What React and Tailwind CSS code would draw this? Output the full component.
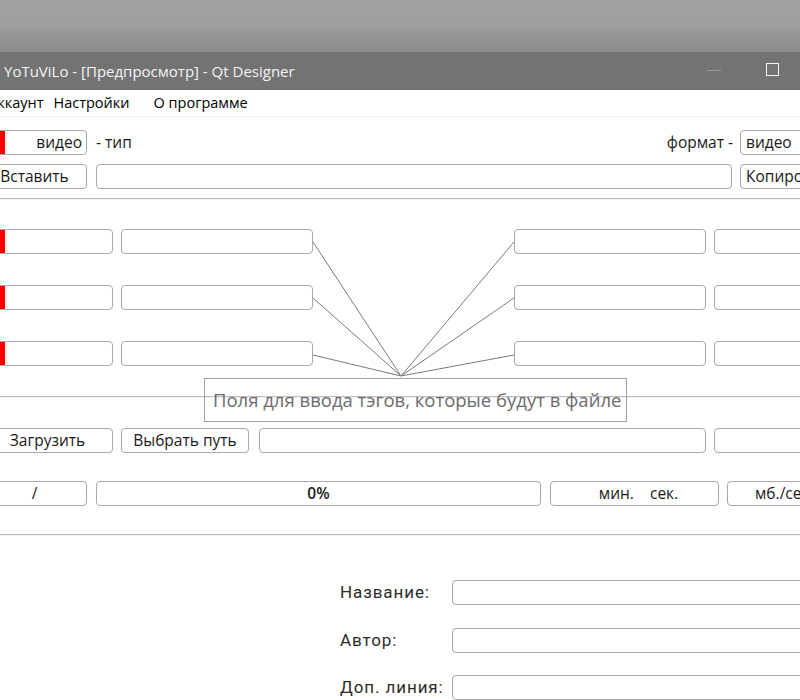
import React from "react";

const widgetFont = { fontFamily: "'Open Sans', 'Noto Sans', sans-serif" };

function Box({ className = "", children, red = false }) {
  return (
    <div
      className={`h-[25px] shrink-0 flex items-center border border-[#a8a8a8] rounded-[4px] bg-white text-[15.5px] text-[#1a1a1a] whitespace-nowrap overflow-hidden ${className}`}
    >
      {red && <div className="ml-[17px] w-[5px] h-[23px] bg-[#ff0000]" />}
      {children}
    </div>
  );
}

function Separator({ className = "" }) {
  return <div className={`h-[2px] w-full border-t border-[#bdbdbd] border-b border-b-[#f2f2f2] ${className}`} />;
}

export default function App() {
  return (
    <div className="relative w-[800px] h-[700px] overflow-hidden bg-white" style={widgetFont}>
      {/* desktop strip above the window */}
      <div className="h-[52px] bg-gradient-to-b from-[#a3a3a3] via-[#9d9d9d] to-[#8c8c8c]" />

      {/* title bar */}
      <div className="h-[38px] bg-[#737373] flex items-center relative">
        <span className="ml-[4px] text-[15px] text-[#f4f4f4]">
          YoTuViLo - [Предпросмотр] - Qt Designer
        </span>
        <div className="absolute left-[707px] top-[18px] w-[14px] h-[1px] bg-[#9c9c9c]" />
        <div className="absolute left-[766px] top-[11px] w-[13px] h-[13px] border-[1.5px] border-[#f4f4f4]" />
      </div>

      {/* menu bar */}
      <div className="h-[27px] flex items-center text-[14.5px] text-black border-b border-[#f0f0f0]">
        <span className="ml-[-12px]">Аккаунт</span>
        <span className="ml-[10px]">Настройки</span>
        <span className="ml-[24px]">О программе</span>
      </div>

      {/* content */}
      <div className="ml-[-18px] w-[1000px]">
        {/* row 1 */}
        <div className="mt-[13px] flex items-center">
          <Box className="w-[105px]" red>
            <span className="ml-auto mr-[4px]">видео</span>
          </Box>
          <div className="ml-[9px] w-[637px] flex justify-between text-[15.5px] text-[#1a1a1a]">
            <span>- тип</span>
            <span>формат -</span>
          </div>
          <Box className="ml-[7px] w-[110px]">
            <span className="ml-[5px]">видео</span>
          </Box>
        </div>

        {/* row 2 */}
        <div className="mt-[9px] flex items-center">
          <Box className="w-[105px] justify-center">Вставить</Box>
          <Box className="ml-[9px] w-[636px]" />
          <Box className="ml-[8px] w-[100px]">
            <span className="ml-[5px]">Копировать</span>
          </Box>
        </div>
      </div>

      <Separator className="mt-[9px]" />

      <div className="ml-[-18px] w-[1000px]">
        {[0, 1, 2].map((i) => (
          <div key={i} className={`${i === 0 ? "mt-[29px]" : "mt-[31px]"} flex items-center`}>
            <Box className="w-[131px]" red />
            <Box className="ml-[8px] w-[192px]" />
            <Box className="ml-[201px] w-[192px]" />
            <Box className="ml-[8px] w-[150px]" />
          </div>
        ))}
      </div>

      <Separator className="mt-[30px]" />

      <div className="ml-[-18px] w-[1000px]">
        <div className="mt-[30px] flex items-center">
          <Box className="w-[131px] justify-center">Загрузить</Box>
          <Box className="ml-[8px] w-[128px] justify-center">Выбрать путь</Box>
          <Box className="ml-[10px] w-[447px]" />
          <Box className="ml-[8px] w-[150px]" />
        </div>

        <div className="mt-[28px] flex items-center">
          <Box className="w-[105px] justify-center">/</Box>
          <Box className="ml-[9px] w-[445px] justify-center font-semibold">0%</Box>
          <Box className="ml-[9px] w-[169px] justify-center">
            <span className="ml-[8px]">мин.&nbsp;&nbsp;&nbsp;&nbsp;сек.</span>
          </Box>
          <Box className="ml-[8px] w-[120px]">
            <span className="ml-[27px]">мб./сек.</span>
          </Box>
        </div>
      </div>

      <Separator className="mt-[28px]" />

      {/* form */}
      <div
        className="ml-[340px] mt-[44px] flex flex-col gap-[22px] text-[17px] tracking-[0.9px] text-[#2b2b2b]"
        style={{ fontFamily: "Roboto, 'Noto Sans', sans-serif" }}
      >
        {["Название:", "Автор:", "Доп. линия:"].map((label) => (
          <div key={label} className="flex items-center">
            <span className="w-[112px] shrink-0">{label}</span>
            <Box className="w-[400px]" />
          </div>
        ))}
      </div>

      {/* callout lines */}
      <svg className="absolute left-0 top-0 pointer-events-none" width="800" height="700">
        <g stroke="#7a7a7a" strokeWidth="1" fill="none">
          <line x1="313" y1="242" x2="401" y2="376" />
          <line x1="313" y1="298" x2="401" y2="376" />
          <line x1="313" y1="355" x2="401" y2="376" />
          <line x1="514" y1="242" x2="401" y2="376" />
          <line x1="514" y1="298" x2="401" y2="376" />
          <line x1="514" y1="355" x2="401" y2="376" />
        </g>
      </svg>

      {/* callout */}
      <div className="absolute left-[204px] top-[378px] w-[423px] h-[44px] border border-[#a0a0a0] flex items-center pl-[8px] text-[18.5px] text-[#6b6b6b] whitespace-nowrap">
        Поля для ввода тэгов, которые будут в файле
      </div>
    </div>
  );
}
